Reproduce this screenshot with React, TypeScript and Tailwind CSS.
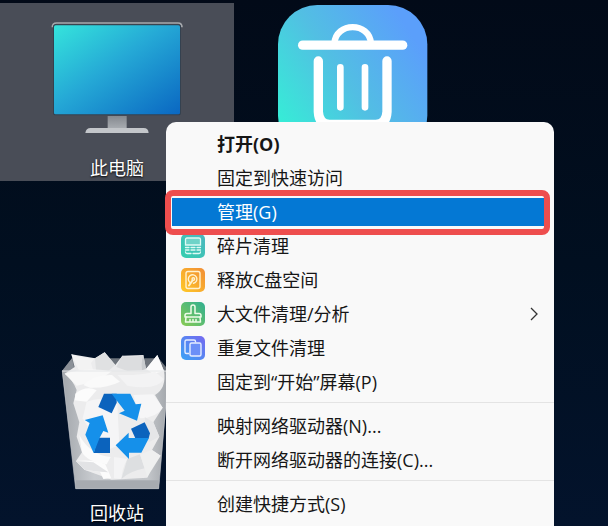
import type { ReactNode } from 'react'
import clsx from 'clsx'

interface MenuEntry {
  label: string
  icon?: ReactNode
  bold?: boolean
  highlighted?: boolean
  submenu?: boolean
}

function MonitorIcon() {
  return (
    <svg viewBox="153 66 396 336" className="h-[112px] w-[132px]" aria-hidden="true">
      <defs>
        <linearGradient id="screen" x1="0" y1="0" x2="1" y2="1">
          <stop offset="0" stopColor="#35e4dc" />
          <stop offset="0.45" stopColor="#25a9d6" />
          <stop offset="1" stopColor="#0a67c2" />
        </linearGradient>
        <linearGradient id="neck" x1="0" y1="0" x2="0" y2="1">
          <stop offset="0" stopColor="#85898f" />
          <stop offset="1" stopColor="#a9adb2" />
        </linearGradient>
      </defs>
      <path d="M157 82 Q157 69 170 69 H534 Q546 69 546 82" fill="none" stroke="#a6a9ad" strokeWidth="5" />
      <rect x="159" y="73" width="384" height="273" rx="8" fill="#34414f" />
      <rect x="162" y="76" width="378" height="267" rx="5" fill="url(#screen)" />
      <rect x="323" y="348" width="57" height="38" fill="url(#neck)" />
      <path d="M256 399 Q258 384 272 384 H431 Q445 384 446 399 Z" fill="#c3c6ca" />
    </svg>
  )
}

function RecycleBinIcon() {
  return (
    <svg viewBox="63 39 336 429" className="h-[143px] w-[112px]" aria-hidden="true">
      <defs>
        <linearGradient id="glass" x1="0" y1="0" x2="1" y2="0">
          <stop offset="0" stopColor="#a3a7ac" />
          <stop offset="0.3" stopColor="#c9ccd0" />
          <stop offset="0.8" stopColor="#c3c6ca" />
          <stop offset="1" stopColor="#a0a4a9" />
        </linearGradient>
      </defs>
      <path d="M66 108 L96 70 H356 L388 108 Z" fill="#6d737b" />
      <path d="M66 108 L96 70 L104 108 Z" fill="#8b9097" />
      <path d="M66 108 H388 L356 461 H107 Z" fill="url(#glass)" />
      {/* crumpled paper */}
      <path
        d="M94 58 L165 70 L194 52 L226 90 L247 62 L310 60 L318 102 L352 60 L372 108 Q380 160 345 180 L368 218 L340 262 L358 305 L336 345 L362 362 L336 395 L322 428 L215 434 L135 405 L108 378 L126 352 L110 305 L118 262 L100 205 L110 165 Q96 130 74 116 L104 96 Z"
        fill="#ececed"
      />
      <path d="M94 58 Q128 72 165 70 L153 84 L160 108 L116 104 Z" fill="#f3f3f3" />
      <path d="M165 70 L194 52 L226 90 L200 112 L168 106 Z" fill="#e0e1e2" />
      <path d="M247 62 Q280 68 310 60 Q300 84 306 106 L262 108 L229 96 Z" fill="#dcdddf" />
      <path d="M310 60 L318 102 L306 106 Q301 84 310 60 Z" fill="#c9cccf" />
      <path d="M352 60 L372 108 L340 116 L318 102 Z" fill="#fbfbfb" />
      <path d="M74 116 Q140 96 216 108 Q180 140 110 152 Z" fill="#f8f8f8" />
      <path d="M130 150 Q160 118 216 120 L240 140 Q200 160 150 158 Z" fill="#fafafa" />
      <path d="M232 120 Q300 122 345 110 L372 132 Q350 168 262 152 Z" fill="#f3f3f4" />
      <path d="M104 196 L106 176 Q140 150 170 166 L140 200 Z" fill="#fcfcfc" />
      <path d="M140 200 Q190 180 232 208 L238 330 L190 350 L128 250 Z" fill="#f5f5f6" />
      <path d="M280 180 L340 178 L368 218 Q350 248 300 250 Z" fill="#f6f6f7" />
      <path d="M314 246 L340 262 L358 305 L326 322 Z" fill="#e5e6e8" />
      <path d="M118 300 Q150 360 212 366 L200 388 Q140 380 126 352 Z" fill="#fbfbfb" />
      <path d="M222 366 L262 372 Q246 400 244 432 L222 430 Z" fill="#f4f4f5" />
      <path d="M262 372 L300 358 L314 400 Q270 408 244 432 Z" fill="#dddfe1" />
      <path d="M300 358 L336 345 L362 362 L322 426 Z" fill="#eff0f0" />
      <path d="M108 378 Q160 372 196 388 L214 430 L190 432 L180 410 L135 405 Z" fill="#fcfcfc" />
      <path d="M108 378 L160 382 L205 412 L180 410 L135 405 Z" fill="#e2e3e5" />
      <path d="M107 436 H358 L356 461 H107 Z" fill="#a7abb0" />
      <path d="M66 108 H388" stroke="#e4e6e8" strokeWidth="3" />
      <path d="M67 108 L107 461 H356 L386 108" fill="none" stroke="#b9bdc2" strokeWidth="2" />
      {/* recycle arrows */}
      <g transform="translate(108 147)">
        <path d="M84 29 H122 V56 L107 88 L67 69 Z" fill="#0b63bd" />
        <path d="M84 29 H163 L179 61 L196 59 L183 110 L129 88 L146 80 L121 48 L107 29 Z" fill="#1590ea" />
        <path d="M66 161 H102 V207 H53 Z" fill="#0b63bd" />
        <path d="M26 108 L80 94 L97 146 L82 141 L71 161 L53 207 L28 152 L41 117 Z" fill="#1590ea" />
        <path d="M165 134 L206 115 L222 148 L218 163 H178 Z" fill="#0b63bd" />
        <path d="M119 184 L158 146 V162 H219 L196 206 H159 V225 Z" fill="#1590ea" />
      </g>
    </svg>
  )
}

function CleanerIcon() {
  return (
    <svg viewBox="53 14 450 450" className="size-[150px]" aria-hidden="true">
      <defs>
        <linearGradient id="cleaner" x1="0" y1="0.8" x2="0.9" y2="0.2">
          <stop offset="0" stopColor="#35eed6" />
          <stop offset="0.5" stopColor="#52bfe3" />
          <stop offset="1" stopColor="#5b9ffb" />
        </linearGradient>
      </defs>
      <rect x="53" y="14" width="448" height="450" rx="118" fill="url(#cleaner)" />
      <g fill="none" stroke="#fff" strokeLinecap="round">
        <path d="M127 134.500 H427" strokeWidth="28" />
        <path d="M222 130 C226 64 328 64 332 130" strokeWidth="19" />
        <path d="M174 182 V334 Q176 372 208 372 H346 Q378 372 380 334 V182" strokeWidth="28" />
        <path d="M240 201 V321 M314 201 V321" strokeWidth="20" />
      </g>
    </svg>
  )
}

function DefragIcon() {
  return (
    <svg viewBox="0 0 24 24" className="size-6" aria-hidden="true">
      <defs>
        <linearGradient id="defrag" x1="0" y1="1" x2="1" y2="0">
          <stop offset="0" stopColor="#35cfae" />
          <stop offset="1" stopColor="#4bb5bf" />
        </linearGradient>
      </defs>
      <rect width="24" height="24" rx="5" fill="url(#defrag)" />
      <g fill="none" stroke="#dffaf4" strokeWidth="1.300" strokeLinecap="round">
        <path d="M4.500 11 V5.500 Q4.500 4 6 4 H18 Q19.500 4 19.500 5.500 V11 Z" fill="#6fd3c8" />
        <path d="M4.500 13.500 H8 M10 13.500 H14 M16 13.500 H19.500" />
        <path d="M4.500 16 H8 M10 16 H14 M16 16 H19.500" />
        <path d="M4.500 18 Q4.500 19.500 6 19.500 H10 M12 19.500 H18 Q19.500 19.500 19.500 18" />
      </g>
    </svg>
  )
}

function DiskIcon() {
  return (
    <svg viewBox="0 0 24 24" className="size-6" aria-hidden="true">
      <defs>
        <linearGradient id="disk" x1="0" y1="1" x2="1" y2="0">
          <stop offset="0" stopColor="#ffc928" />
          <stop offset="1" stopColor="#f18d35" />
        </linearGradient>
      </defs>
      <rect width="24" height="24" rx="5" fill="url(#disk)" />
      <g fill="none" stroke="#fff2cf" strokeWidth="1.400" strokeLinecap="round">
        <rect x="5" y="3.500" width="14" height="17" rx="2" />
        <path d="M9 14.500 A4.300 4.300 0 1 1 12.500 15.300" />
        <circle cx="12.300" cy="11" r="1.300" />
        <path d="M11.500 12.500 L8 17.500" strokeWidth="2" />
      </g>
    </svg>
  )
}

function BrushIcon() {
  return (
    <svg viewBox="0 0 24 24" className="size-6" aria-hidden="true">
      <defs>
        <linearGradient id="brush" x1="0" y1="1" x2="1" y2="0">
          <stop offset="0" stopColor="#8acb52" />
          <stop offset="1" stopColor="#2faf91" />
        </linearGradient>
      </defs>
      <rect width="24" height="24" rx="5" fill="url(#brush)" />
      <g fill="none" stroke="#effce9" strokeWidth="1.500" strokeLinejoin="round" strokeLinecap="round">
        <path d="M10 11.500 V5 Q10 3 12 3 Q14 3 14 5 V11.500 H18 Q20 11.500 20 13.500 V15 H4 V13.500 Q4 11.500 6 11.500 Z" />
        <path d="M5 15 L4.500 20 H19.500 L19 15 M9 17.500 V20 M12 17.500 V20 M15 17.500 V20" />
      </g>
    </svg>
  )
}

function DuplicateIcon() {
  return (
    <svg viewBox="0 0 24 24" className="size-6" aria-hidden="true">
      <defs>
        <linearGradient id="duplicate" x1="0" y1="1" x2="1" y2="0">
          <stop offset="0" stopColor="#3aa3f5" />
          <stop offset="1" stopColor="#7668ef" />
        </linearGradient>
      </defs>
      <rect width="24" height="24" rx="5" fill="url(#duplicate)" />
      <g stroke="#e6edff" strokeWidth="1.400" strokeLinejoin="round">
        <path d="M8 17.500 H5.500 Q4 17.500 4 16 V5.500 Q4 4 5.500 4 H13 Q14.500 4 14.500 5.500 V6.500" fill="none" />
        <rect x="9" y="7" width="11" height="13" rx="1.500" fill="#6c8ff7" />
      </g>
    </svg>
  )
}

const sections: MenuEntry[][] = [
  [
    { label: '打开(O)', bold: true },
    { label: '固定到快速访问' },
    { label: '管理(G)', highlighted: true },
    { label: '碎片清理', icon: <DefragIcon /> },
    { label: '释放C盘空间', icon: <DiskIcon /> },
    { label: '大文件清理/分析', icon: <BrushIcon />, submenu: true },
    { label: '重复文件清理', icon: <DuplicateIcon /> },
    { label: '固定到“开始”屏幕(P)' }
  ],
  [{ label: '映射网络驱动器(N)...' }, { label: '断开网络驱动器的连接(C)...' }],
  [{ label: '创建快捷方式(S)' }]
]

function MenuItem({ label, icon, bold, highlighted, submenu }: MenuEntry) {
  return (
    <li role="none" className={clsx('relative', highlighted && 'z-10 py-[3px]')}>
      <button
        type="button"
        role="menuitem"
        className={clsx(
          'flex w-full items-center gap-3 pr-[6px] pl-[9px] text-left text-[18px] leading-6 whitespace-nowrap',
          bold && 'font-bold',
          highlighted ? 'h-7 bg-[#0478d4] text-white' : 'h-[34px] text-[#161616]'
        )}
      >
        <span className="size-6 shrink-0">{icon}</span>
        <span className="flex-1">{label}</span>
        {submenu && (
          <svg viewBox="0 0 8 14" className="h-[14px] w-2" fill="none" stroke="#333" strokeWidth="1.300" aria-hidden="true">
            <path d="M1 1 L7 7 L1 13" />
          </svg>
        )}
      </button>
      {/* Callout frame around the active entry */}
      {highlighted && (
        <span className="pointer-events-none absolute -top-[5px] -right-[6px] -bottom-[6px] -left-[7px] rounded-lg border-[6px] border-[#ee4e4e]" />
      )}
    </li>
  )
}

function DesktopItem({ label, className, children }: { label: string; className: string; children: ReactNode }) {
  return (
    <button type="button" className={clsx('flex w-full flex-col items-center text-[18px] leading-6 text-white', className)}>
      {children}
      <span className="text-shadow-[0_1px_2px_#000]">{label}</span>
    </button>
  )
}

export default function App() {
  return (
    <main className="relative h-screen overflow-hidden bg-linear-to-b from-[#020a18] via-[#010f20] to-[#03132c] font-['Open_Sans','Noto_Sans_CJK_SC',sans-serif]">
      <div className="flex items-start gap-11">
        <div className="flex w-[234px] flex-col gap-[157px] pt-[3px]">
          <DesktopItem label="此电脑" className="gap-[22px] bg-[#494d57] pt-[19px] pb-px">
            <MonitorIcon />
          </DesktopItem>
          <DesktopItem label="回收站" className="gap-[10px] pt-[10px]">
            <RecycleBinIcon />
          </DesktopItem>
        </div>
        <button type="button" aria-label="清理" className="pt-[5px]">
          <CleanerIcon />
        </button>
      </div>

      <nav className="absolute top-[122px] left-[166px] w-[388px] rounded-[10px] bg-[#f9f9f9] pt-[5px] pb-8">
        {sections.map((entries, i) => (
          <ul
            key={i}
            role="menu"
            className={clsx('pr-[10px] pl-[6px]', i > 0 && 'mt-[3px] border-t border-[#e4e4e4] pt-[6px]')}
          >
            {entries.map(entry => (
              <MenuItem key={entry.label} {...entry} />
            ))}
          </ul>
        ))}
      </nav>
    </main>
  )
}
